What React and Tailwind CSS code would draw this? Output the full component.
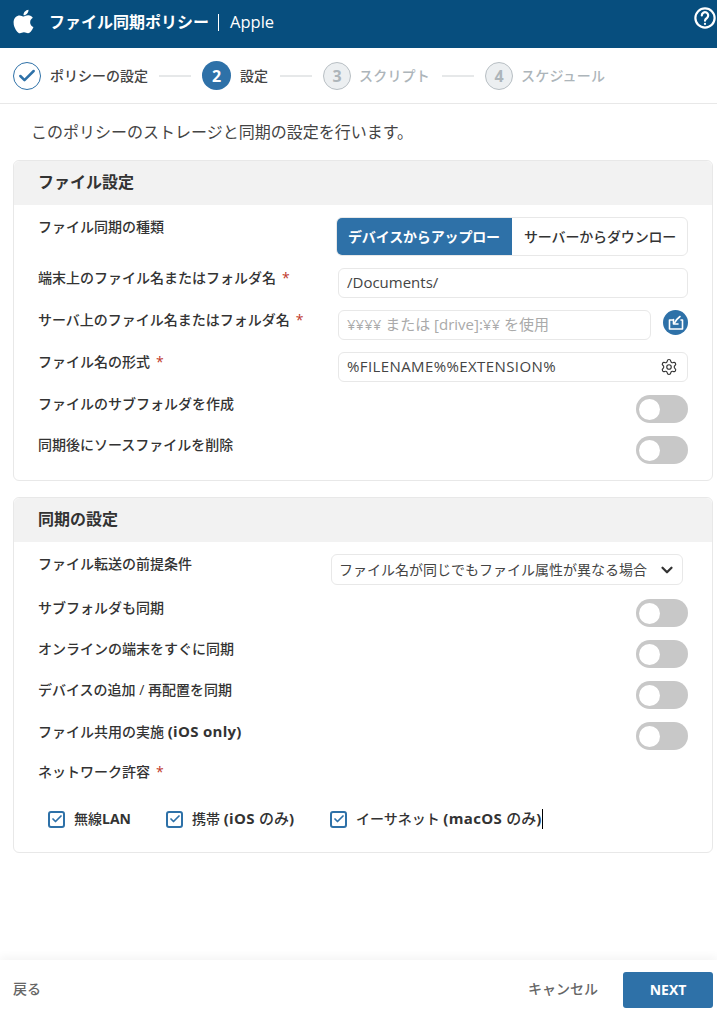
import { Check, ChevronDown, Settings } from 'lucide-react'
import { FaApple } from 'react-icons/fa'

const font = { fontFamily: '"Open Sans", "Noto Sans CJK JP", sans-serif' }

function Toggle() {
  return (
    <div className="ml-auto flex h-7 w-[52px] shrink-0 items-center rounded-full bg-[#c8c8c8] pl-[3px]">
      <div className="h-[21px] w-[21px] rounded-full bg-white" />
    </div>
  )
}

function Label({ children, required }) {
  return (
    <div className="text-sm leading-5 font-medium text-[#333]">
      {children}
      {required && <span className="ml-1.5 text-[#c0392b]">*</span>}
    </div>
  )
}

function Latin({ children }) {
  return <span className="text-[15px] font-bold tracking-[0.3px]">{children}</span>
}

function ToggleRow({ label, className }) {
  return (
    <div className={`flex items-start justify-between ${className}`}>
      <div className="-mt-px"><Label>{label}</Label></div>
      <Toggle />
    </div>
  )
}

function InputRow({ label, required, children }) {
  return (
    <div className="mt-3 flex items-start">
      <div className="w-[300px] shrink-0"><Label required={required}>{label}</Label></div>
      {children}
    </div>
  )
}

function Step({ n, label, state, last }) {
  return (
    <>
      {state === 'done' && (
        <div className="flex h-7 w-7 shrink-0 items-center justify-center rounded-full border border-[#2e71a8]">
          <Check size={20} strokeWidth={3} className="text-[#2e71a8]" />
        </div>
      )}
      {state === 'active' && (
        <div className="flex h-[29px] w-[29px] shrink-0 items-center justify-center rounded-full bg-[#2e71a8] text-base font-bold text-white">{n}</div>
      )}
      {state === 'todo' && (
        <div className="flex h-7 w-7 shrink-0 items-center justify-center rounded-full border border-[#b8bfc4] bg-[#eceff1] text-base font-bold text-[#adb5ba]">{n}</div>
      )}
      {state === 'todo' ? (
        <span className="mr-px ml-2 text-sm font-medium tracking-[0.2px] text-[#adb5ba]">{label}</span>
      ) : (
        <span className={`ml-[9px] text-sm font-medium text-[#444] ${state === 'active' ? 'mr-px' : ''}`}>{label}</span>
      )}
      {!last && <div className="mx-[11px] h-0.5 w-8 bg-[#e6e8e9]" />}
    </>
  )
}

function CheckItem({ children, className, caret }) {
  return (
    <div className={`flex items-center ${className}`}>
      <div className="flex h-[17px] w-[17px] items-center justify-center rounded-[3px] border-2 border-[#2e71a8]">
        <Check size={12} strokeWidth={3.500} className="text-[#2e71a8]" />
      </div>
      <span className="ml-[9px] text-sm font-medium text-[#333]">{children}</span>
      {caret && <span className="h-5 w-px bg-black" />}
    </div>
  )
}

export default function App() {
  return (
    <div style={font} className="flex h-screen flex-col overflow-hidden bg-white">
      <header className="flex h-12 shrink-0 items-center bg-[#074e7e] pb-1 pl-[10px] text-white">
        <FaApple size={27} className="-mt-0.5" />
        <span className="ml-3 text-base font-bold">ファイル同期ポリシー</span>
        <span className="ml-[9px] h-[17px] w-px bg-white" />
        <span className="ml-[11px] text-[16.500px]">Apple</span>
        <svg className="mt-[-8px] ml-auto mr-px" width="22" height="22" viewBox="0 0 24 24" fill="none" stroke="white" strokeWidth="2.400" strokeLinecap="round">
          <circle cx="12" cy="12" r="10.500" />
          <path d="M8.500 9.200a3.500 3.500 0 1 1 5.600 2.800c-1.300.9-2.100 1.500-2.100 3" />
          <path d="M12 18.400v.1" />
        </svg>
      </header>

      <div className="flex h-14 shrink-0 items-center border-b border-[#e8e8e8] pl-[13px]">
        <Step n={1} label="ポリシーの設定" state="done" />
        <Step n={2} label="設定" state="active" />
        <Step n={3} label="スクリプト" state="todo" />
        <Step n={4} label="スケジュール" state="todo" last />
      </div>

      <p className="mt-4 pl-[31px] text-base leading-6 text-[#444]">このポリシーのストレージと同期の設定を行います。</p>

      <section className="mt-4 mr-1 ml-[13px] h-[321px] shrink-0 rounded-md border border-[#e8e8e8]">
        <h2 className="flex h-11 items-center rounded-t-md bg-[#f2f2f2] pb-0.5 pl-6 text-base font-bold text-[#333]">ファイル設定</h2>
        <div className="pt-3 pr-6 pl-6">
          <div className="flex items-start">
            <div className="w-[298px] shrink-0"><Label>ファイル同期の種類</Label></div>
            <div className="flex h-[39px] w-[352px] overflow-hidden rounded-md border border-[#e8e8e8] text-sm font-medium tracking-[-0.15px]">
              <div className="flex w-[175px] items-center whitespace-nowrap bg-[#2e71a8] pl-[11px] font-bold text-white">デバイスからアップロー</div>
              <div className="flex flex-1 items-center whitespace-nowrap pl-3 text-[#333]">サーバーからダウンロー</div>
            </div>
          </div>
          <InputRow label="端末上のファイル名またはフォルダ名" required>
            <div className="flex h-[30px] w-[350px] items-center rounded-md border border-[#e8e8e8] pb-0.5 pl-2 text-[15px] text-[#444]">/Documents/</div>
          </InputRow>
          <InputRow label="サーバ上のファイル名またはフォルダ名" required>
            <div className="flex h-[30px] w-[313px] items-center rounded-md border border-[#e8e8e8] pb-0.5 pl-2 text-[15px] text-[#aaa]">¥¥¥¥ または [drive]:¥¥ を使用</div>
            <div className="ml-3 flex h-[25px] w-[25px] shrink-0 items-center justify-center rounded-full bg-[#2e71a8]">
              <svg width="16" height="16" viewBox="0 0 16 16" fill="none" stroke="white" strokeWidth="1.600" strokeLinecap="round" strokeLinejoin="round">
                <path d="M5 5H1.500V14H14.500V5H13" />
                <path d="M12 1.500C10 3 8 4.500 6.500 8" />
                <path d="M5.500 4.500V9H10" />
              </svg>
            </div>
          </InputRow>
          <InputRow label="ファイル名の形式" required>
            <div className="flex h-[30px] w-[350px] items-center justify-between rounded-md border border-[#e8e8e8] pr-[9px] pl-2 text-[15px] text-[#444]">
              <span className="-mt-0.5 tracking-[0.4px]">%FILENAME%%EXTENSION%</span>
              <Settings size={18} strokeWidth={1.500} className="text-[#333]" />
            </div>
          </InputRow>
          <ToggleRow label="ファイルのサブフォルダを作成" className="mt-[13px]" />
          <ToggleRow label="同期後にソースファイルを削除" className="mt-[13px]" />
        </div>
      </section>

      <section className="mt-4 mr-1 ml-[13px] h-[356px] shrink-0 rounded-md border border-[#e8e8e8]">
        <h2 className="flex h-11 items-center rounded-t-md bg-[#f2f2f2] pb-0.5 pl-6 text-base font-bold text-[#333]">同期の設定</h2>
        <div className="pt-3 pr-6 pl-6">
          <div className="flex items-start">
            <div className="w-[293px] shrink-0"><Label>ファイル転送の前提条件</Label></div>
            <div className="flex h-[31px] w-[352px] items-center justify-between rounded-md border border-[#e8e8e8] pr-[6px] pl-[7px] text-sm text-[#444]">
              ファイル名が同じでもファイル属性が異なる場合
              <ChevronDown size={18} strokeWidth={3} className="text-[#333]" />
            </div>
          </div>
          <ToggleRow label="サブフォルダも同期" className="mt-[14px]" />
          <ToggleRow label="オンラインの端末をすぐに同期" className="mt-[13px]" />
          <ToggleRow label="デバイスの追加 / 再配置を同期" className="mt-[13px]" />
          <ToggleRow label={<>ファイル共用の実施 <Latin>(iOS only)</Latin></>} className="mt-[13px]" />
          <div className="mt-3"><Label required>ネットワーク許容</Label></div>
          <div className="mt-[27px] flex h-5 items-center pl-2.5">
            <CheckItem className="w-[118px]">無線<span className="font-bold">LAN</span></CheckItem>
            <CheckItem className="w-[164px]">携帯 <Latin>(iOS </Latin><span className="text-[15px]">のみ</span><Latin>)</Latin></CheckItem>
            <CheckItem caret>イーサネット <Latin>(macOS </Latin><span className="text-[15px]">のみ</span><Latin>)</Latin></CheckItem>
          </div>
        </div>
      </section>

      <footer className="mt-auto flex h-14 shrink-0 items-center bg-white pt-1 pr-1 pl-[13px] shadow-[0_-4px_8px_rgba(0,0,0,0.04)]">
        <span className="pb-0.5 text-sm font-medium text-[#666]">戻る</span>
        <span className="ml-auto pb-0.5 text-sm font-medium text-[#666]">キャンセル</span>
        <button className="ml-[25px] h-9 w-[90px] rounded-[3px] bg-[#2e71a8] text-sm font-bold text-white">NEXT</button>
      </footer>
    </div>
  )
}
